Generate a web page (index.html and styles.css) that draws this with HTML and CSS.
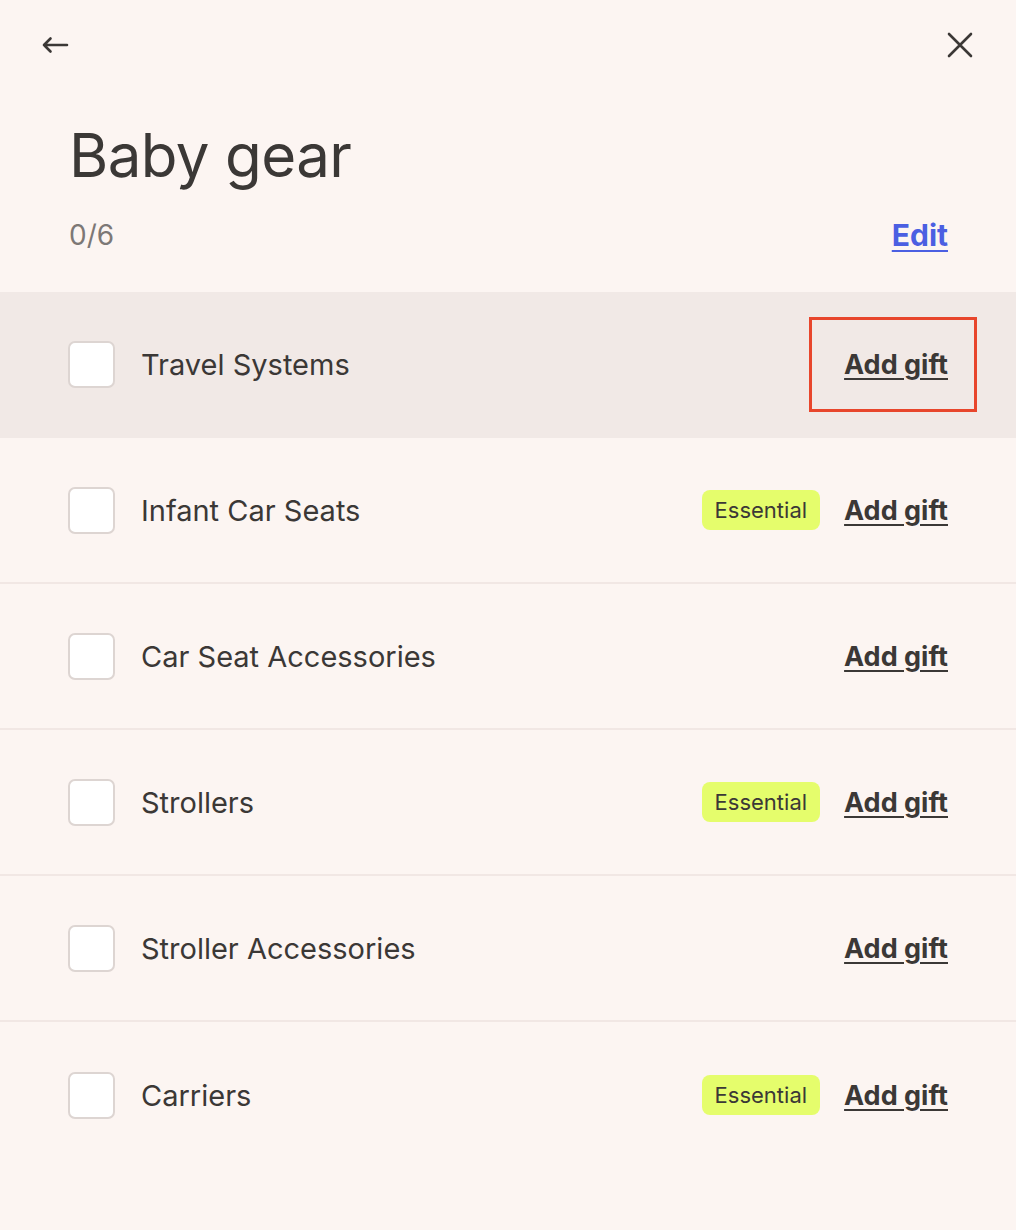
FILE: index.html
```html
<!DOCTYPE html>
<html lang="en">
<head>
<meta charset="utf-8">
<title>Baby gear</title>
<link rel="stylesheet" href="styles.css">
</head>
<body>
<div class="page">
  <header class="topbar">
    <button class="icon-btn" aria-label="Back">
      <svg width="28" height="18" viewBox="0 0 28 18" fill="none" stroke="#3b3836" stroke-width="2.6" stroke-linecap="round" stroke-linejoin="round"><path d="M26 9H3M9.5 2.5L3 9l6.5 6.5"/></svg>
    </button>
    <button class="icon-btn" aria-label="Close">
      <svg width="26" height="26" viewBox="0 0 26 26" fill="none" stroke="#3b3836" stroke-width="2.6" stroke-linecap="round"><path d="M2 2l22 22M24 2L2 24"/></svg>
    </button>
  </header>
  <section class="intro">
    <h1 class="title">Baby gear</h1>
    <div class="meta">
      <span class="count">0/6</span>
      <a class="edit" href="#">Edit</a>
    </div>
  </section>
  <ul class="list">
    <li class="row row-active">
      <span class="check"></span>
      <span class="name">Travel Systems</span>
      <span class="actions"><a class="add add-focus" href="#">Add gift</a></span>
    </li>
    <li class="row">
      <span class="check"></span>
      <span class="name">Infant Car Seats</span>
      <span class="actions"><span class="badge">Essential</span><a class="add" href="#">Add gift</a></span>
    </li>
    <li class="row">
      <span class="check"></span>
      <span class="name">Car Seat Accessories</span>
      <span class="actions"><a class="add" href="#">Add gift</a></span>
    </li>
    <li class="row">
      <span class="check"></span>
      <span class="name">Strollers</span>
      <span class="actions"><span class="badge">Essential</span><a class="add" href="#">Add gift</a></span>
    </li>
    <li class="row">
      <span class="check"></span>
      <span class="name">Stroller Accessories</span>
      <span class="actions"><a class="add" href="#">Add gift</a></span>
    </li>
    <li class="row row-last">
      <span class="check"></span>
      <span class="name">Carriers</span>
      <span class="actions"><span class="badge">Essential</span><a class="add" href="#">Add gift</a></span>
    </li>
  </ul>
</div>
</body>
</html>
```
FILE: styles.css
```css
* { box-sizing: border-box; }
html, body { margin: 0; padding: 0; }
body {
  background: #fcf5f2;
  font-family: "Inter", "Noto Sans", sans-serif;
  color: #3b3836;
}
.page { width: 1016px; min-height: 1230px; }
.topbar {
  height: 90px;
  display: flex;
  align-items: center;
  justify-content: space-between;
  padding: 0 43px 0 41px;
}
.icon-btn {
  background: none;
  border: 0;
  padding: 0;
  display: flex;
  cursor: pointer;
}
.intro { padding: 27px 68px 37px 69px; }
.title {
  margin: 0;
  font-size: 60px;
  font-weight: 400;
  line-height: 76px;
  letter-spacing: -0.6px;
  color: #3b3836;
}
.meta {
  display: flex;
  justify-content: space-between;
  align-items: center;
  margin-top: 22px;
  height: 40px;
}
.count { font-size: 28px; color: #7d7876; }
.edit {
  font-size: 30px;
  font-weight: 700;
  color: #4b5fe2;
  text-decoration: underline;
  text-underline-offset: 4px;
  text-decoration-thickness: 2px;
}
.list { list-style: none; margin: 0; padding: 0; }
.row {
  height: 146px;
  display: flex;
  align-items: center;
  padding: 0 68px;
  border-bottom: 2px solid #f1e7e4;
}
.row-active { background: #f1e9e6; border-bottom-color: #f1e9e6; }
.row-last { border-bottom: 0; }
.check {
  width: 47px;
  height: 47px;
  border: 2px solid #ddd5d2;
  border-radius: 7px;
  background: #fff;
  flex: none;
}
.name {
  margin-left: 26px;
  font-size: 29px;
  flex: 1;
}
.actions { display: flex; align-items: center; gap: 24px; }
.badge {
  background: #e5fd6c;
  border-radius: 8px;
  height: 40px;
  padding: 0 13px;
  display: flex;
  align-items: center;
  font-size: 22px;
}
.add {
  font-size: 27px;
  font-weight: 700;
  color: #3b3836;
  text-decoration: underline;
  text-underline-offset: 4px;
  text-decoration-thickness: 2px;
}
.add-focus {
  outline: 3px solid #e8462c;
  outline-offset: 0;
  padding: 28px 26px 28px 32px;
  margin: 0 -26px 0 -32px;
}
```
